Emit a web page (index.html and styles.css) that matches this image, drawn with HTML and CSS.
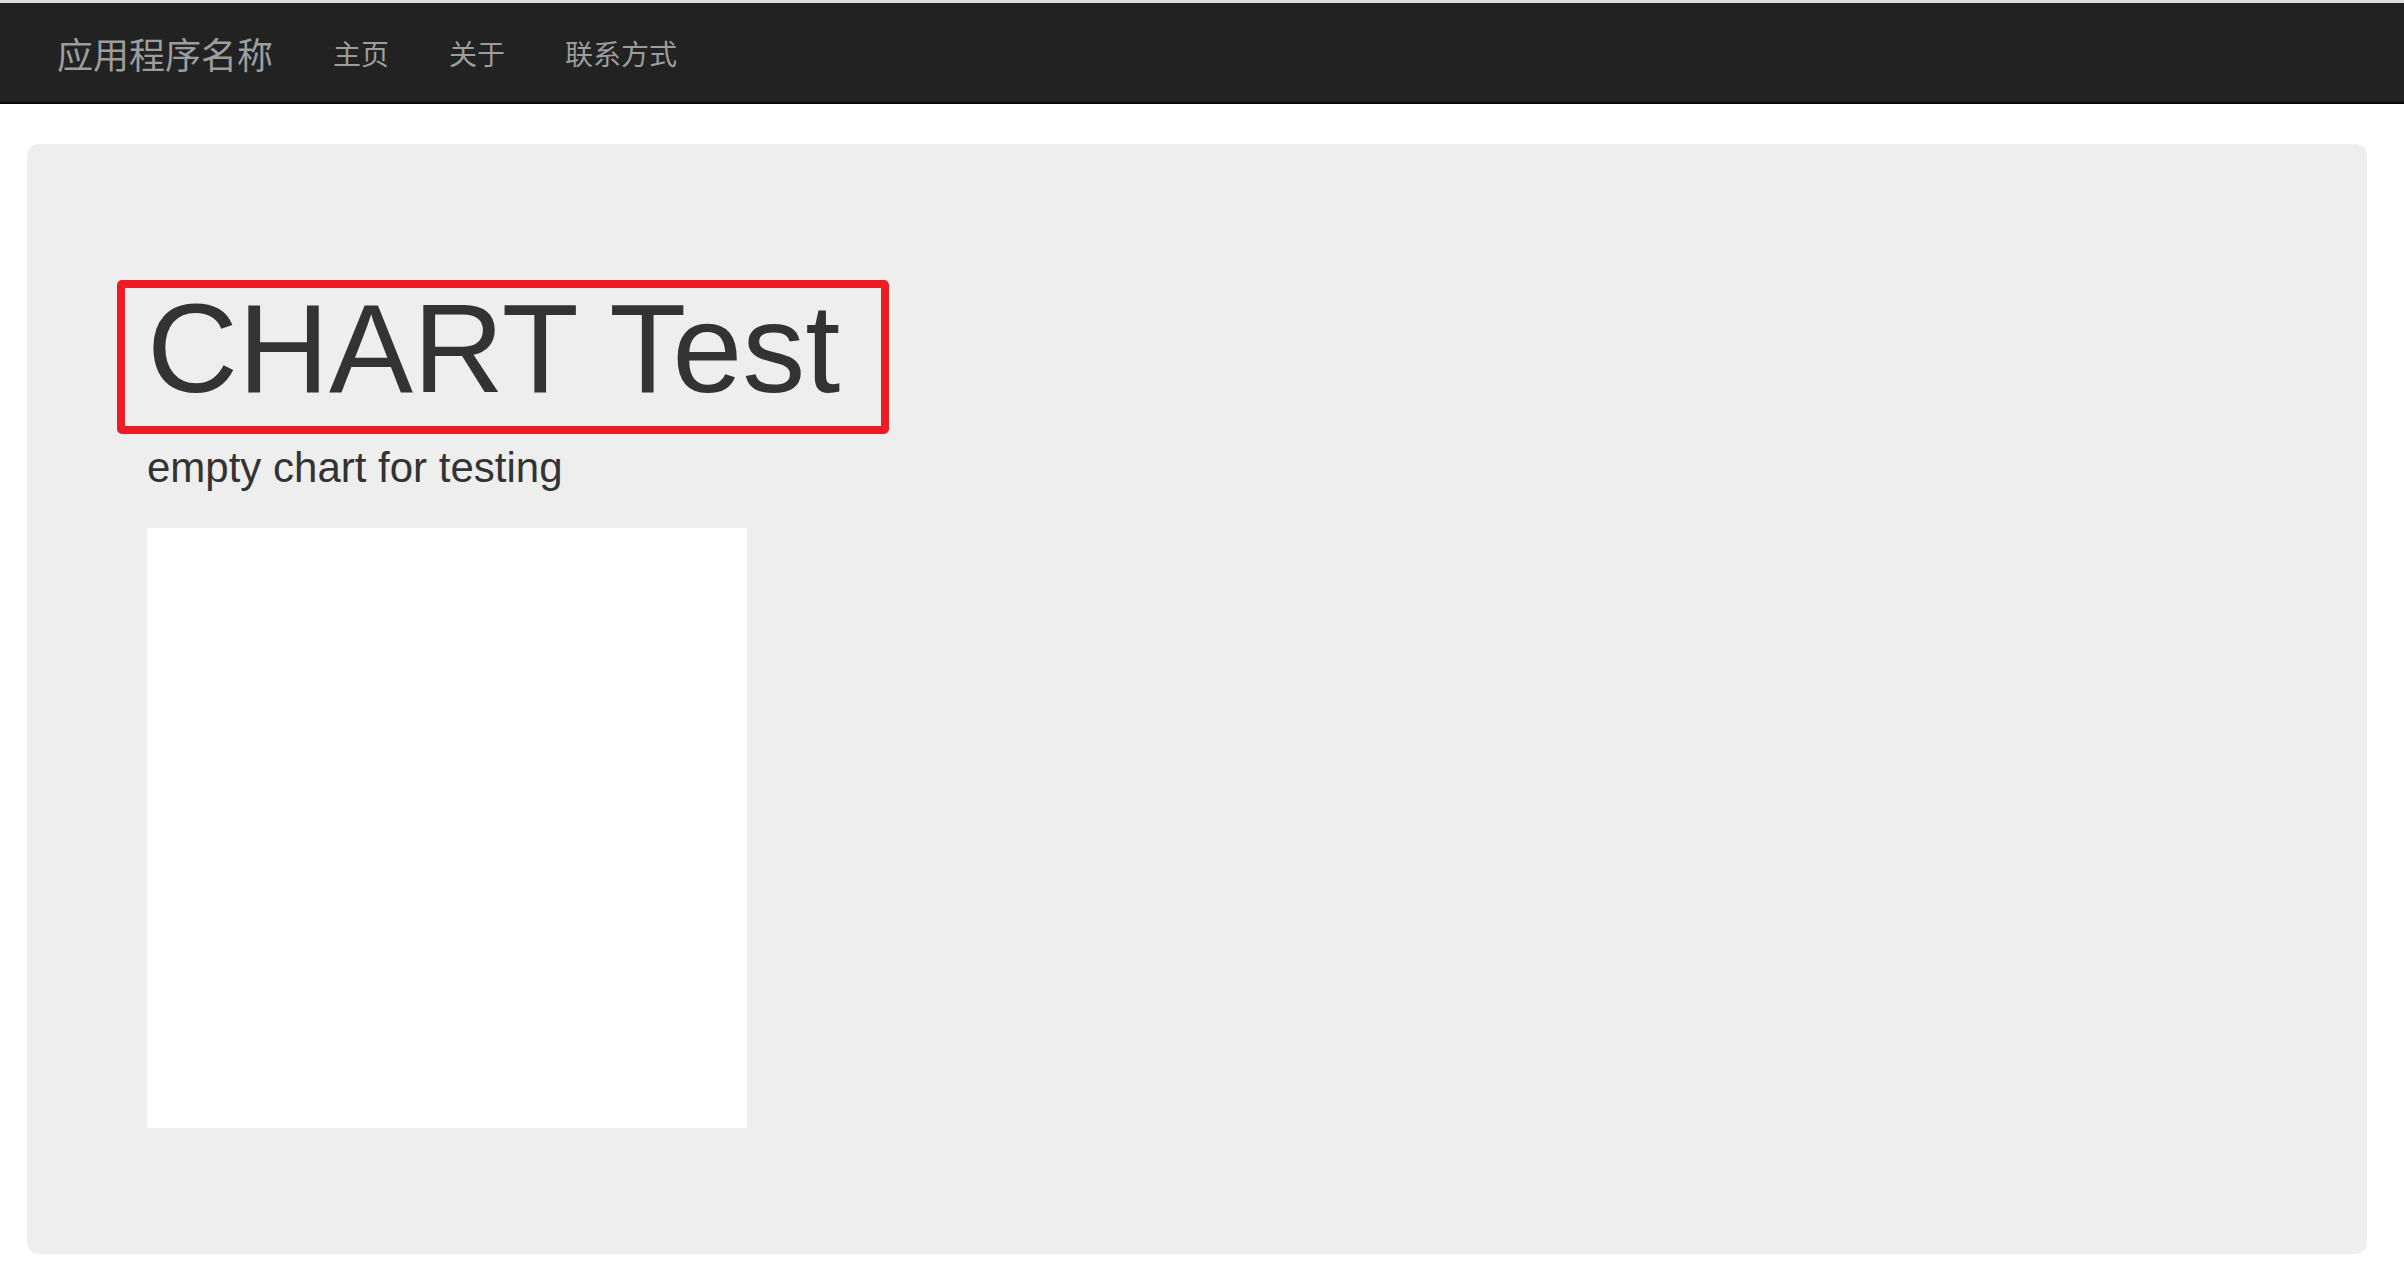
FILE: index.html
```html
<!DOCTYPE html>
<html lang="zh-CN">
<head>
  <meta charset="utf-8">
  <title>CHART Test</title>
  <link rel="stylesheet" href="styles.css">
</head>
<body>
  <!-- Top navigation -->
  <nav class="navbar">
    <div class="container navbar-inner">
      <a class="navbar-brand" href="#">应用程序名称</a>
      <ul class="nav">
        <li><a href="#">主页</a></li>
        <li><a href="#">关于</a></li>
        <li><a href="#">联系方式</a></li>
      </ul>
    </div>
  </nav>

  <div class="container">
    <div class="jumbotron">
      <div class="title-wrap">
        <h1>CHART Test</h1>
        <!-- highlight marker drawn over the title -->
        <span class="marker"></span>
      </div>
      <p>empty chart for testing</p>
      <div class="chart" id="chart"></div>
    </div>
  </div>
</body>
</html>
```

FILE: styles.css
```css
/* Global Styles */
body {
  margin: 0;
  border-top: 3px solid #dcdcdf;
  background-color: #fff;
  color: #333;
  font-family: "Liberation Sans", Arial, "Noto Sans CJK SC", sans-serif;
  font-size: 28px;
  line-height: 1.42857;
}
.container {
  width: 2340px;
  margin: 0 27px;
}

/* Navbar */
.navbar {
  background-color: #222;
  border-bottom: 2px solid #080808;
  height: 99px;
  margin-bottom: 40px;
}
.navbar-inner {
  display: flex;
  align-items: center;
  height: 100%;
}
.navbar a {
  color: #9d9d9d;
  text-decoration: none;
  font-family: "Noto Sans CJK SC", "Liberation Sans", sans-serif;
}
.navbar-brand {
  font-size: 36px;
  line-height: 40px;
  padding: 0 30px;
}
.nav {
  display: flex;
  list-style: none;
  margin: 0;
  padding: 0;
}
.nav a {
  display: block;
  font-size: 28px;
  line-height: 40px;
  padding: 0 30px;
}

/* Jumbotron */
.jumbotron {
  background-color: #eee;
  border-radius: 12px;
  padding: 96px 120px;
}
.title-wrap {
  position: relative;
}
.jumbotron h1 {
  font-size: 126px;
  font-weight: 500;
  line-height: 1.1;
  margin: 40px 0 19px;
}
.marker {
  position: absolute;
  top: 0;
  left: -30px;
  width: 756px;
  height: 138px;
  border: 8px solid #ed1c24;
  border-radius: 5px;
}
.jumbotron p {
  font-size: 42px;
  line-height: 60px;
  margin: 0 0 30px;
}
.chart {
  width: 600px;
  height: 600px;
  background-color: #fff;
  margin-bottom: 30px;
}
```
